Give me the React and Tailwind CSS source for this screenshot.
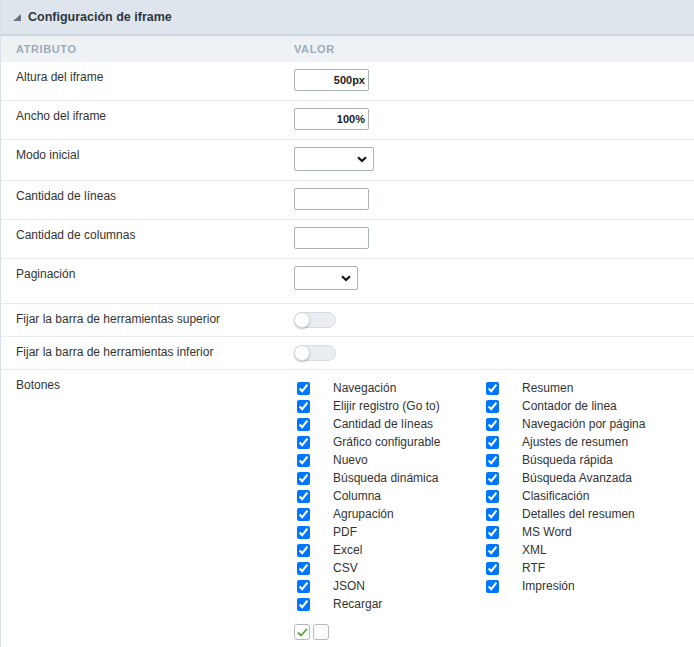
import React from 'react'

const left = [
    'Navegación',
    'Elijir registro (Go to)',
    'Cantidad de líneas',
    'Gráfico configurable',
    'Nuevo',
    'Búsqueda dinámica',
    'Columna',
    'Agrupación',
    'PDF',
    'Excel',
    'CSV',
    'JSON',
    'Recargar',
]

const right = [
    'Resumen',
    'Contador de linea',
    'Navegación por página',
    'Ajustes de resumen',
    'Búsqueda rápida',
    'Búsqueda Avanzada',
    'Clasificación',
    'Detalles del resumen',
    'MS Word',
    'XML',
    'RTF',
    'Impresión',
]

const TextInput = ({ value }) => (
    <div className="w-[75px] h-[22px] border border-[#a9b1ba] rounded-[2px] bg-white flex items-center justify-end pr-[3px] text-[11px] font-bold text-[#222]">
        {value}
    </div>
)

const Select = ({ width }) => (
    <div className={`${width} h-[24px] border border-[#a9b1ba] rounded-[2px] bg-white flex items-center justify-end pr-[6px]`}>
        <svg width="10" height="7" viewBox="0 0 10 7">
            <path d="M1 1.2 L5 5 L9 1.2" fill="none" stroke="#111" strokeWidth="2.2" />
        </svg>
    </div>
)

const Toggle = () => (
    <div className="relative w-[42px] h-[16px] rounded-full bg-[#eaeef2] border border-[#d6dde3]">
        <div className="absolute -left-[1px] -top-[1px] w-[16px] h-[16px] rounded-full bg-white border border-[#d6dde3] shadow-[0_1px_2px_rgba(0,0,0,0.25)]"></div>
    </div>
)

const Row = ({ label, children, h }) => (
    <div className={`flex border-b border-[#e8ecf0] ${h}`}>
        <div className="w-[293px] pl-[15px] pt-[6px] text-[12px] text-[#333]">{label}</div>
        <div className="pt-[7px]">{children}</div>
    </div>
)

const ToggleRow = ({ label }) => (
    <div className="flex border-b border-[#e8ecf0] h-[33px] items-center">
        <div className="w-[293px] pl-[15px] pb-[3px] text-[12px] text-[#333]">{label}</div>
        <Toggle />
    </div>
)

const Check = ({ label }) => (
    <div className="flex items-center h-[18px]">
        <div className="w-[39px] flex items-center">
            <input type="checkbox" defaultChecked className="w-[13px] h-[13px] ml-[3px] m-0" />
        </div>
        <span className="text-[12px] text-[#333]">{label}</span>
    </div>
)

export default function App() {
    return (
        <div className="w-[694px] h-[647px] bg-white border-l border-[#d9e0e7] overflow-hidden" style={{ fontFamily: '"Liberation Sans", Arial, sans-serif' }}>
            {/* panel title */}
            <div className="h-[36px] bg-[#dfe5ec] border-b-2 border-[#ccd5dd] flex items-center pl-[12px] gap-[7px]">
                <svg width="8" height="7" viewBox="0 0 8 7">
                    <path d="M8 0 L8 7 L0 7 Z" fill="#6b7480" />
                </svg>
                <span className="text-[12.5px] font-bold text-[#2f3640]">Configuración de iframe</span>
            </div>

            {/* column heads */}
            <div className="h-[26px] bg-[#eef2f5] flex items-center text-[11px] font-bold tracking-[0.6px] text-[#9aabb9]">
                <div className="w-[293px] pl-[15px]">ATRIBUTO</div>
                <div>VALOR</div>
            </div>

            <Row label="Altura del iframe" h="h-[39px]"><TextInput value="500px" /></Row>
            <Row label="Ancho del iframe" h="h-[39px]"><TextInput value="100%" /></Row>
            <Row label="Modo inicial" h="h-[41px]"><Select width="w-[80px]" /></Row>
            <Row label="Cantidad de líneas" h="h-[39px]"><TextInput value="" /></Row>
            <Row label="Cantidad de columnas" h="h-[39px]"><TextInput value="" /></Row>
            <Row label="Paginación" h="h-[45px]"><Select width="w-[64px]" /></Row>

            <ToggleRow label="Fijar la barra de herramientas superior" />
            <ToggleRow label="Fijar la barra de herramientas inferior" />

            {/* toolbar buttons */}
            <div className="flex">
                <div className="w-[293px] pl-[15px] pt-[6px] text-[12px] text-[#333]">Botones</div>
                <div className="pt-[9px]">
                    <div className="flex">
                        <div className="w-[189px]">
                            {left.map((l) => <Check key={l} label={l} />)}
                        </div>
                        <div>
                            {right.map((l) => <Check key={l} label={l} />)}
                        </div>
                    </div>
                    <div className="flex gap-[3px] mt-[11px]">
                        <div className="w-[16px] h-[16px] border border-[#b3b8bd] rounded-[3px] flex items-center justify-center">
                            <svg width="11" height="9" viewBox="0 0 11 9">
                                <path d="M1 4.5 L4 7.5 L10 1" fill="none" stroke="#5aa33f" strokeWidth="1.8" />
                            </svg>
                        </div>
                        <div className="w-[16px] h-[16px] border border-[#b3b8bd] rounded-[3px]"></div>
                    </div>
                </div>
            </div>
        </div>
    )
}
